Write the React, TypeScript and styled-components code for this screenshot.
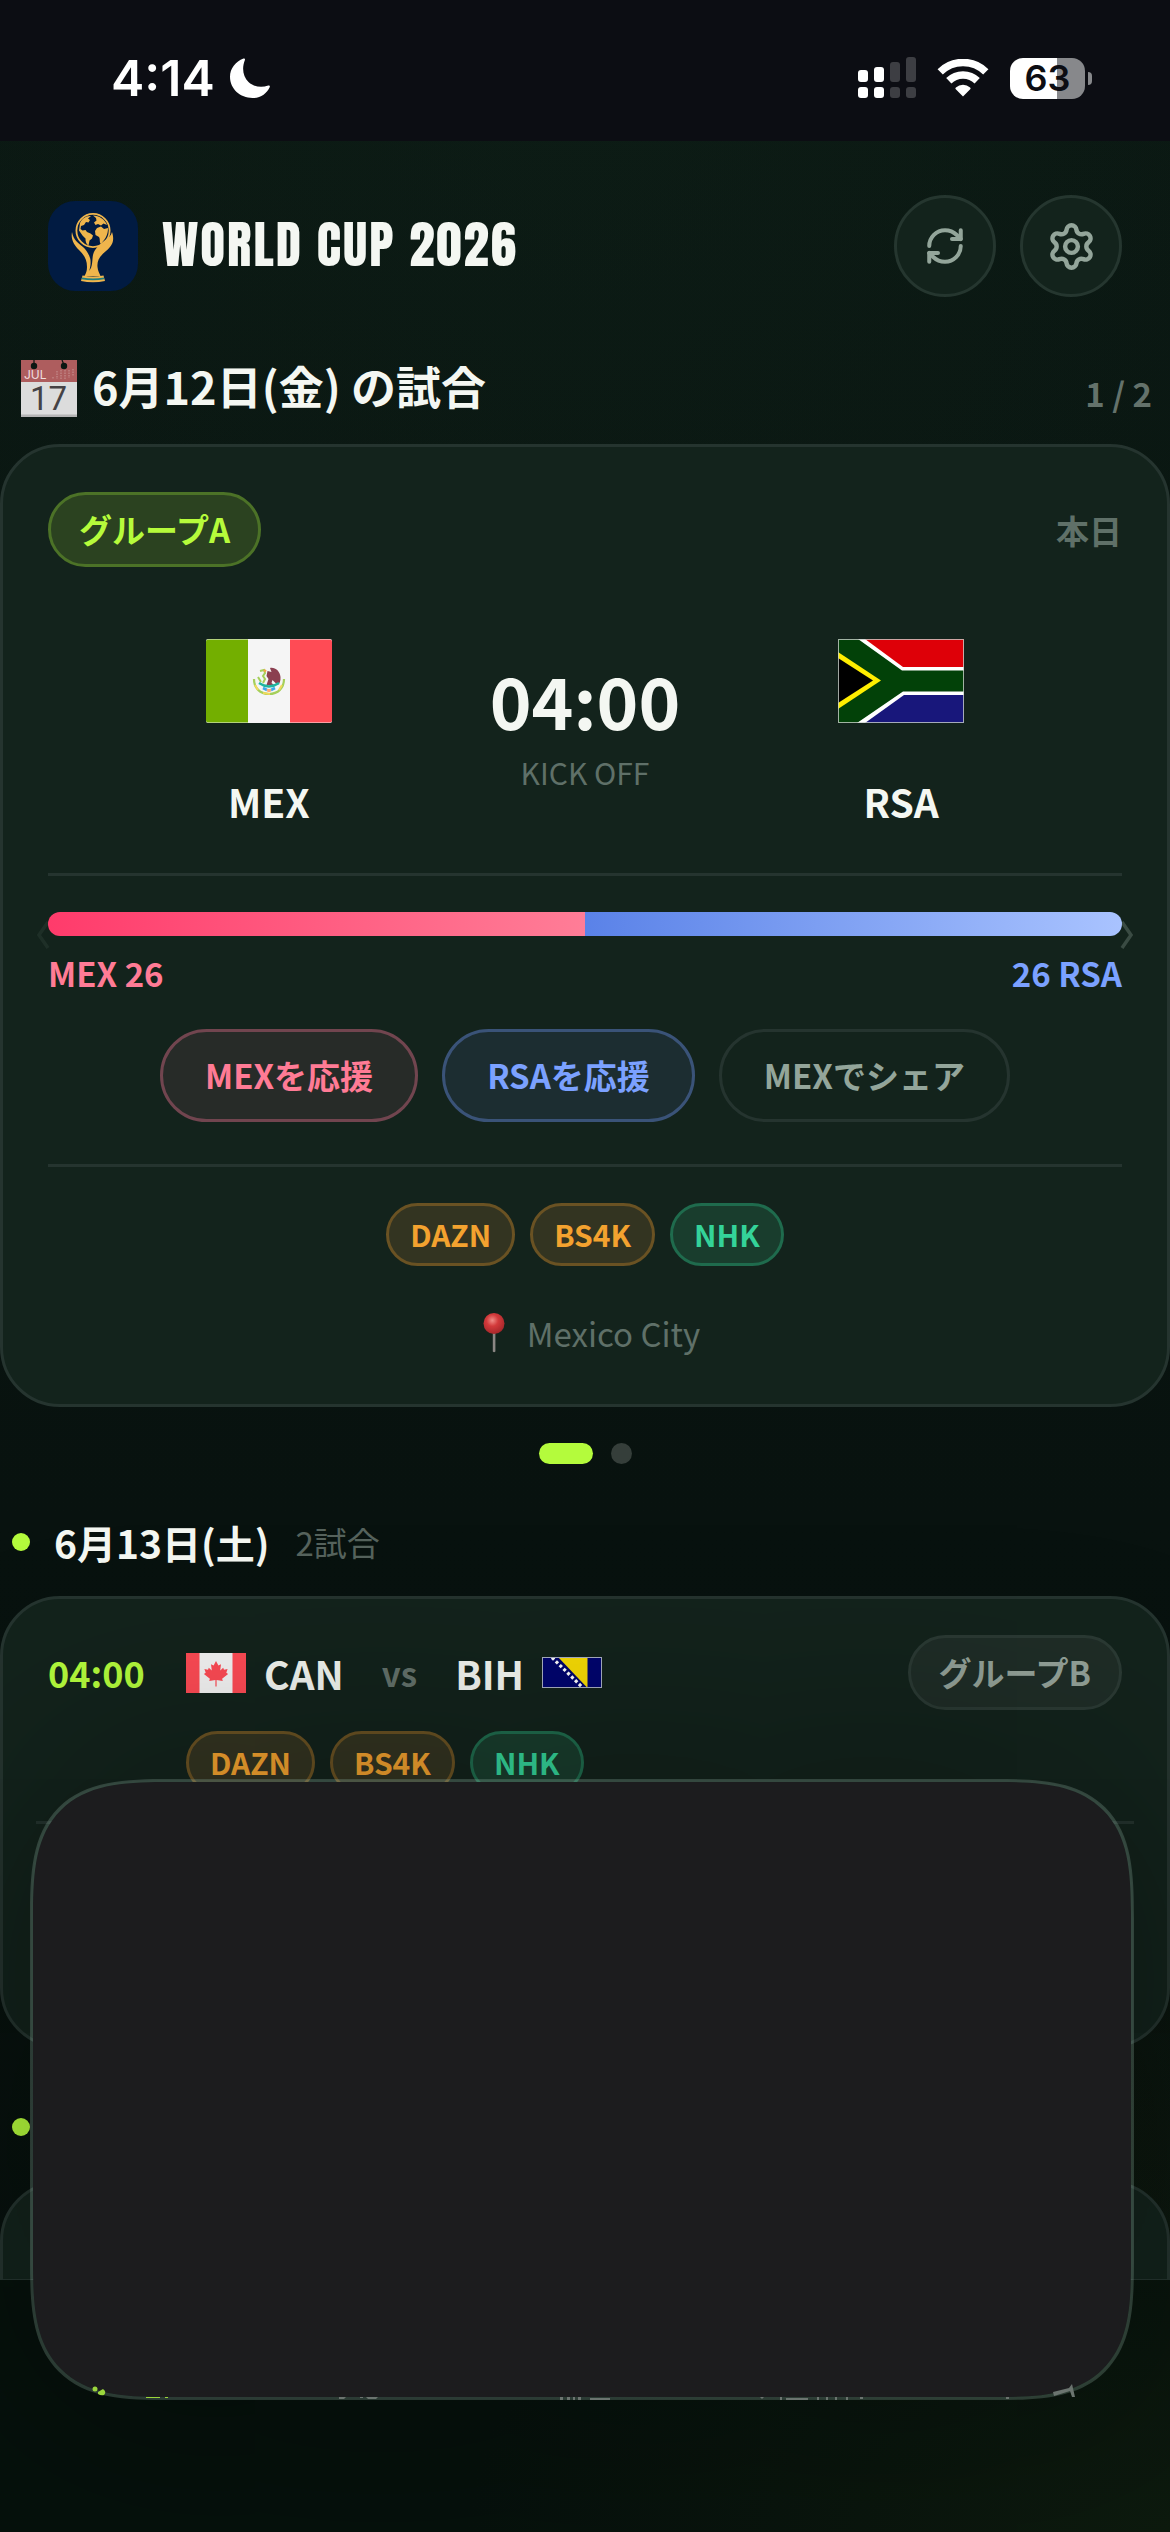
import React, { useState } from "react";
import styled, { createGlobalStyle, css } from "styled-components";
import { RefreshCw, Settings } from "lucide-react";

type Tone = "amber" | "green";

interface Channel {
  name: string;
  tone: Tone;
}

const channels: Channel[] = [
  { name: "DAZN", tone: "amber" },
  { name: "BS4K", tone: "amber" },
  { name: "NHK", tone: "green" },
];

const votes = { home: 26, away: 26 };

export default function App() {
  const [slide, setSlide] = useState(0);
  const homeShare = (votes.home / (votes.home + votes.away)) * 100;

  return (
    <Page>
      <GlobalStyle />
      <StatusBar>
        <Clock>
          4:14
          <MoonIcon />
        </Clock>
        <StatusIcons>
          <SignalIcon />
          <WifiIcon />
          <Battery>
            <BatteryBody>63</BatteryBody>
            <BatteryNub />
          </Battery>
        </StatusIcons>
      </StatusBar>

      <Header>
        <TrophyLogo />
        <AppTitle>WORLD CUP 2026</AppTitle>
        <RoundButton type="button" aria-label="更新">
          <RefreshCw size={42} strokeWidth={2.3} />
        </RoundButton>
        <RoundButton type="button" aria-label="設定">
          <Settings size={51} strokeWidth={2.1} />
        </RoundButton>
      </Header>

      <main>
        <SectionRow>
          <CalendarIcon />
          <SectionTitle>6月12日(金) の試合</SectionTitle>
          <Counter>1 / 2</Counter>
        </SectionRow>

        <HeroCard>
          <SlideButton type="button" $side="left" aria-label="前の試合">
            <Chevron />
          </SlideButton>
          <SlideButton type="button" $side="right" aria-label="次の試合">
            <Chevron />
          </SlideButton>

          <HeroTop>
            <GroupBadge $active>グループA</GroupBadge>
            <Today>本日</Today>
          </HeroTop>

          <Matchup>
            <Team>
              <MexicoFlag />
              <TeamName>MEX</TeamName>
            </Team>
            <Kickoff>
              <KickoffTime>04:00</KickoffTime>
              <KickoffLabel>KICK OFF</KickoffLabel>
            </Kickoff>
            <Team>
              <SouthAfricaFlag />
              <TeamName>RSA</TeamName>
            </Team>
          </Matchup>

          <CheerSection>
            <CheerBar>
              <HomeBar style={{ width: `${homeShare}%` }} />
              <AwayBar />
            </CheerBar>
            <CheerCounts>
              <HomeCount>MEX {votes.home}</HomeCount>
              <AwayCount>{votes.away} RSA</AwayCount>
            </CheerCounts>
            <CheerButtons>
              <CheerButton type="button" $kind="home">
                MEXを応援
              </CheerButton>
              <CheerButton type="button" $kind="away">
                RSAを応援
              </CheerButton>
              <CheerButton type="button" $kind="share">
                MEXでシェア
              </CheerButton>
            </CheerButtons>
          </CheerSection>

          <ChannelSection>
            <ChannelRow>
              {channels.map((channel) => (
                <ChannelBadge key={channel.name} $tone={channel.tone}>
                  {channel.name}
                </ChannelBadge>
              ))}
            </ChannelRow>
            <Venue>
              <PinIcon />
              Mexico City
            </Venue>
          </ChannelSection>
        </HeroCard>

        <Pager>
          {[0, 1].map((index) => (
            <PagerDot
              key={index}
              type="button"
              $active={slide === index}
              aria-label={`${index + 1}枚目`}
              onClick={() => setSlide(index)}
            />
          ))}
        </Pager>

        <DateRow>
          <Bullet />
          <DateTitle>6月13日(土)</DateTitle>
          <MatchCount>2試合</MatchCount>
        </DateRow>

        <ListCard>
          <MatchItem>
            <MatchTime>04:00</MatchTime>
            <MatchBody>
              <MatchTeams>
                <CanadaFlag />
                <ShortName>CAN</ShortName>
                <Versus>vs</Versus>
                <ShortName>BIH</ShortName>
                <BosniaFlag />
              </MatchTeams>
              <ListChannels>
                {channels.map((channel) => (
                  <ChannelBadge key={channel.name} $tone={channel.tone}>
                    {channel.name}
                  </ChannelBadge>
                ))}
              </ListChannels>
            </MatchBody>
            <GroupBadge>グループB</GroupBadge>
          </MatchItem>
          <NextMatch />
        </ListCard>

        <DateRow>
          <Bullet />
        </DateRow>
        <ListCard />
      </main>

      <BottomNav />
      <Sheet>
        <SheetEdge />
      </Sheet>
    </Page>
  );
}

/* ---------- icons ---------- */

const MoonIcon = () => (
  <svg width="44" height="44" viewBox="0 0 44 44" aria-hidden="true">
    <path
      d="M15.5 2.500c.9-.4 1.800.4 1.400 1.400C13.600 12 15 21 20.500 26c5.500 5 13 6 19.800 3.500 1-.4 1.900.5 1.500 1.400C38.800 37.600 32.500 42 24.500 42 12.200 42 2 33 2 20.800 2 12.500 7.500 5.500 15.500 2.500z"
      fill="#fff"
    />
  </svg>
);

const SignalIcon = () => (
  <svg width="58" height="42" viewBox="0 0 58 42" aria-hidden="true">
    <g fill="#fff">
      <rect x="0" y="13" width="10" height="12" rx="3" />
      <rect x="16" y="10" width="10" height="15" rx="3" />
      <rect x="0" y="30" width="10" height="11" rx="3" />
      <rect x="16" y="30" width="10" height="11" rx="3" />
    </g>
    <g fill="#3d3e43">
      <rect x="32" y="5" width="10" height="20" rx="3" />
      <rect x="48" y="0" width="10" height="25" rx="3" />
      <rect x="32" y="30" width="10" height="11" rx="3" />
      <rect x="48" y="30" width="10" height="11" rx="3" />
    </g>
  </svg>
);

const WifiIcon = () => (
  <svg width="52" height="38" viewBox="0 0 52 38" aria-hidden="true">
    <g fill="none" stroke="#fff" strokeWidth="7.500">
      <path d="M3.200 12.800a32.500 32.500 0 0 1 45.600 0" />
      <path d="M11.800 21.800a20.300 20.300 0 0 1 28.400 0" />
    </g>
    <path d="M26 37.500l-7.200-7.300c-.6-.6-.5-1.300.1-1.800a11 11 0 0 1 14.200 0c.6.5.7 1.200.1 1.800z" fill="#fff" />
  </svg>
);

const TrophyLogo = () => (
  <Logo viewBox="0 0 90 90" role="img" aria-label="World Cup">
    <rect width="90" height="90" rx="27" fill="#011b42" />
    <circle cx="45" cy="29.500" r="16.600" fill="#011b42" stroke="#efb54c" strokeWidth="1.800" />
    <g fill="#efb54c">
      <path d="M32 22c2-4.500 6-7.500 11-7l-3 2.500 2 1.500-1.500 2.500-2.500-.5-2 3-3 1-.5 3 2 1.500 3-.5 1.500 2 3.500 1.500 2.500 2-1 3-2.500 2-1 5c-2.500-1.500-3-4-3-7l-3-3-3.500-5z" />
      <path d="M45 14.500c6 0 12 4 14 9.500l-3.500-1.500-2.500 2-3-1.500-2.500 1-1.500-2.500 2.500-2-.5-2.500z" />
      <path d="M49 27l4-1.500 3 2.500 4-1c0 6-2 10-5.500 14l-1.500 2c-2-2-.5-4.500-2-7l-3.500-2-.5-4z" />
      <path d="M24 31c1.500 8 6 11 11 15 3.500 3 7 9 7.500 13 .4 4-.2 8-1.500 11 4-4 3-12 4-16 1.500-6 6-10 11-14 4-3 7-5 8-9 3 9 0 14-6 19-7 6-9 10-8.500 16 .3 4 2 6 3 9H36.500c1.500-3 2.500-5 2.500-9 0-8-3-12-8-17-5-5-8.500-11-7-18z" />
      <path d="M34.500 74.500q10.500 2 21 0l1.500 5.500q-12 2.500-24 0z" />
    </g>
    <path d="M34 76.500q11 2 22 0v1.800q-11 2-22.500 0z" fill="#1f7f80" />
  </Logo>
);

const CalendarIcon = () => (
  <svg width="56" height="57" viewBox="0 0 56 57" aria-hidden="true">
    <rect width="56" height="57" fill="#dcdcdc" />
    <rect width="56" height="22" fill="#ae5d5e" />
    <rect y="54.500" width="56" height="2.500" fill="#b4b4b4" />
    <circle cx="13" cy="6" r="3.200" fill="#0b1712" />
    <circle cx="43" cy="6" r="3.200" fill="#0b1712" />
    <path d="M13 0v5M41 0l2 5" stroke="#0b1712" strokeWidth="1.200" />
    <path d="M32 17v2M36 11v8M40 10v9M44 10v9M48 10v8M52 9v7" stroke="#bf8180" strokeWidth="1.600" strokeDasharray="1.500 1" />
    <text x="3" y="19" fontFamily="Inter, sans-serif" fontSize="12" fill="#f0dede">
      JUL
    </text>
    <text x="27.500" y="50" textAnchor="middle" fontFamily="Roboto, sans-serif" fontSize="33" fill="#454245">
      17
    </text>
  </svg>
);

const Chevron = () => (
  <svg width="14" height="30" viewBox="0 0 14 30" aria-hidden="true">
    <path d="M2 2l9 13-9 13" fill="none" stroke="currentColor" strokeWidth="3.500" />
  </svg>
);

const PinIcon = () => (
  <svg width="24" height="42" viewBox="0 0 24 42" aria-hidden="true">
    <defs>
      <radialGradient id="pinHead" cx="0.420" cy="0.350" r="0.700">
        <stop offset="0" stopColor="#f08c86" />
        <stop offset="0.400" stopColor="#d33a3b" />
        <stop offset="1" stopColor="#a02428" />
      </radialGradient>
    </defs>
    <path d="M10.800 20h2.600v19.500q-1.300 1.500-2.600 0z" fill="#8b8784" />
    <circle cx="12" cy="11.500" r="10.500" fill="url(#pinHead)" />
  </svg>
);

const MexicoFlag = () => (
  <HeroFlag viewBox="0 0 126 84" role="img" aria-label="Mexico">
    <rect width="126" height="84" rx="2" fill="#f5f5f5" />
    <path d="M2 .5h40v83H2a2 2 0 0 1-2-2v-79a2 2 0 0 1 2-2z" fill="#73af00" />
    <path d="M84 .5h40a2 2 0 0 1 2 2v79a2 2 0 0 1-2 2H84z" fill="#ff4b55" />
    <path d="M48 40c0 9 6 15 15 15s15-6 15-15" fill="none" stroke="#a5cf5a" strokeWidth="2.200" />
    <path d="M49 46l3 5M57 54l7 1M73 51l3-5" stroke="#f2d95c" strokeWidth="2" />
    <path d="M64 29c5-1 10 3 10.500 9 .3 4-1 7-3 8l-5-5-1 3 4 3-9-1 2-6-2-3 1-5 4 1z" fill="#8b3f50" />
    <path d="M54 32l4-1 1 3-2 3 2 3-2 4M52 38l3 5" fill="none" stroke="#a5cf5a" strokeWidth="2" />
    <path d="M58 31l2 1.500" stroke="#f5a54a" strokeWidth="2.200" />
    <path d="M53 44q10 7 20 0" fill="none" stroke="#1fb5a0" strokeWidth="2.400" />
    <path d="M57 49l4 2M69 49l-4 2" stroke="#3ca8e8" strokeWidth="2.600" />
    <path d="M60.500 50h5l-1 3h-3z" fill="#ffa876" />
  </HeroFlag>
);

const SouthAfricaFlag = () => (
  <HeroFlag viewBox="0 0 126 84" role="img" aria-label="South Africa">
    <rect width="126" height="84" fill="#fff" />
    <path d="M27 0h99v28H65z" fill="#de0008" />
    <path d="M27 84h99V56H66z" fill="#18177b" />
    <path d="M0 0h20l44 31.500h62v21H65L19 84H0z" fill="#024108" />
    <path d="M0 13l43 28.500L0 70z" fill="#ffee00" />
    <path d="M0 19l35 22.500L0 64z" fill="#000" />
    <rect x=".5" y=".5" width="125" height="83" fill="none" stroke="#c9cfcb" strokeOpacity="0.800" />
  </HeroFlag>
);

const CanadaFlag = () => (
  <SmallFlag $height={40} viewBox="0 0 60 40" role="img" aria-label="Canada">
    <rect width="60" height="40" fill="#f5f5f5" />
    <path d="M0 0h13.500v40H0zM46.500 0H60v40H46.500z" fill="#ff4b55" />
    <path
      d="M30 8l2.400 4.500 2.600-1.300-.8 6.300 3-2.800.8 2 3.600-.6-1.300 3.600 1.800 1.200-6 4.800.7 2.300-6.200-1v6.500h-1.200V27l-6.200 1 .7-2.300-6-4.800 1.800-1.200-1.300-3.600 3.600.6.8-2 3 2.800-.8-6.300 2.600 1.300z"
      fill="#ff4b55"
    />
  </SmallFlag>
);

const BosniaFlag = () => (
  <SmallFlag $height={31} viewBox="0 0 60 31" role="img" aria-label="Bosnia and Herzegovina">
    <rect width="60" height="31" fill="#00056f" />
    <path d="M16 0h29.500v31z" fill="#f9dd05" />
    <path d="M10 .5L41 31" stroke="#fff" strokeWidth="3.200" strokeDasharray="3 2.400" />
    <rect x=".5" y=".5" width="59" height="30" fill="none" stroke="#a9b0c4" />
  </SmallFlag>
);

// Bits of the tab bar that show through the translucent rim of the sheet
const SheetEdge = () => (
  <EdgeMarks viewBox="0 0 1104 24" aria-hidden="true">
    <g fill="#9bd63c">
      <circle cx="65" cy="13" r="2.500" />
      <path d="M68 16l5-3q4 3 1 6-3 1-6-1z" />
      <path d="M116 21h14v1h-14zM135 21h3v1h-3z" />
    </g>
    <g fill="#6b746f">
      <path d="M309 21h7l-2 2h-5zM336 21h12l-2 2h-8zM330 21h3v1h-3z" />
      <path d="M530 21h3v3h-3zM537 21h3v3h-3zM543 21h2v3h-2zM548 21h3v3h-3zM560 22h20v2h-20z" />
      <path d="M730 21h4l-2 2zM750 21h2v3h-2zM756 22h22v2h-22zM787 21h2v3h-2zM796 21h2v3h-2zM805 21h2v3h-2zM816 21h2v3h-2zM830 21h3v2h-3zM976 21h3v2h-3z" />
      <path d="M1023 16l16-4 3-4 3 13h-3l-2-6-16 5z" />
    </g>
  </EdgeMarks>
);

/* ---------- styles ---------- */

const GlobalStyle = createGlobalStyle`
  * {
    box-sizing: border-box;
  }
  body {
    margin: 0;
    background: #050d0a;
    color: #f4f7f2;
    font-family: "Noto Sans CJK JP", "Noto Sans", sans-serif;
    font-size: 33px;
    line-height: 48px;
  }
  button {
    font: inherit;
    color: inherit;
    padding: 0;
    margin: 0;
    border: 0;
    background: none;
    cursor: pointer;
  }
  svg {
    display: block;
    flex: none;
  }
`;

const Page = styled.div`
  position: relative;
  height: 100vh;
  overflow: hidden;
  background:
    radial-gradient(ellipse 90% 50% at 50% 0, rgba(30, 60, 42, 0.14), transparent),
    radial-gradient(ellipse 60% 30% at 100% 100%, rgba(60, 80, 20, 0.16), transparent),
    linear-gradient(#0a1712, #08120f 60%, #07110d);
`;

const StatusBar = styled.div`
  display: flex;
  align-items: center;
  justify-content: space-between;
  height: 141px;
  padding: 15px 78px 0 111px;
  background: #0c0d13;
  color: #fff;
  font-family: Inter, sans-serif;
`;

const Clock = styled.div`
  display: flex;
  align-items: center;
  gap: 13px;
  font-size: 50px;
  font-weight: 600;
`;

const StatusIcons = styled.div`
  display: flex;
  align-items: center;
  gap: 21px;
`;

const Battery = styled.div`
  display: flex;
  align-items: center;
  gap: 3px;
`;

const BatteryBody = styled.div`
  width: 75px;
  height: 41px;
  border-radius: 13px;
  background: linear-gradient(90deg, #fff 63%, #87888b 63%);
  color: #0c0d13;
  font-size: 36px;
  font-weight: 600;
  line-height: 41px;
  text-align: center;
`;

const BatteryNub = styled.div`
  width: 4px;
  height: 13px;
  border-radius: 0 4px 4px 0;
  background: #87888b;
`;

const Header = styled.header`
  display: flex;
  align-items: center;
  gap: 24px;
  padding: 54px 48px 30px;
`;

const Logo = styled.svg`
  width: 90px;
  height: 90px;
`;

const AppTitle = styled.h1`
  flex: 1;
  margin: 0;
  padding-bottom: 3px;
  font-family: Anton, "Roboto Condensed", sans-serif;
  font-size: 51px;
  font-weight: 400;
  letter-spacing: 2px;
  line-height: 72px;
`;

const RoundButton = styled.button`
  display: flex;
  align-items: center;
  justify-content: center;
  width: 102px;
  height: 102px;
  border: 3px solid #25362f;
  border-radius: 50%;
  background: #13231c;
  color: #93a59a;
`;

const SectionRow = styled.div`
  display: flex;
  align-items: flex-end;
  gap: 15px;
  height: 117px;
  padding: 0 18px 27px 21px;
`;

const SectionTitle = styled.h2`
  flex: 1;
  margin: 0;
  font-size: 45px;
  font-weight: 700;
  line-height: 63px;
`;

const Counter = styled.span`
  color: #64726b;
  font-weight: 700;
`;

const Card = styled.section`
  position: relative;
  border: 3px solid #25342f;
  border-radius: 60px;
  background: #13231c;
`;

const HeroCard = styled(Card)`
  padding: 45px;
`;

const SlideButton = styled.button<{ $side: "left" | "right" }>`
  position: absolute;
  top: 50%;
  margin-top: -6px;
  ${({ $side }) => $side}: 33px;
  color: #3a4b43;

  ${({ $side }) =>
    $side === "left" &&
    css`
      opacity: 0.3;
      transform: rotate(180deg);
    `}
`;

const HeroTop = styled.div`
  display: flex;
  align-items: center;
  justify-content: space-between;
`;

const GroupBadge = styled.span<{ $active?: boolean }>`
  padding: 9px 28px;
  border: 3px solid ${({ $active }) => ($active ? "#4c7227" : "#2b3a34")};
  border-radius: 38px;
  background: ${({ $active }) => ($active ? "#2b4220" : "#1f2d27")};
  color: ${({ $active }) => ($active ? "#b6fb3b" : "#93a198")};
  font-weight: 700;
  line-height: 51px;
`;

const Today = styled.span`
  color: #5f7068;
  font-weight: 700;
`;

const Matchup = styled.div`
  display: grid;
  grid-template-columns: 1fr auto 1fr;
  align-items: start;
  padding: 72px 0 48px;
`;

const Team = styled.div`
  display: flex;
  flex-direction: column;
  align-items: center;
  gap: 54px;
`;

const HeroFlag = styled.svg`
  width: 126px;
  height: 84px;
`;

const TeamName = styled.span`
  font-size: 39px;
  font-weight: 700;
`;

const Kickoff = styled.div`
  display: flex;
  flex-direction: column;
  align-items: center;
  gap: 9px;
  padding-top: 18px;
`;

const KickoffTime = styled.strong`
  font-size: 71px;
  font-weight: 700;
  line-height: 84px;
`;

const KickoffLabel = styled.span`
  color: #5f7068;
  font-size: 30px;
  line-height: 45px;
`;

const CheerSection = styled.div`
  padding: 36px 0 42px;
  border-top: 3px solid #25342f;
`;

const CheerBar = styled.div`
  position: relative;
  display: flex;
  height: 24px;
  border-radius: 12px;
  overflow: hidden;
`;

const HomeBar = styled.div`
  background: linear-gradient(90deg, #ff3b6b, #ff7d97);
`;

const AwayBar = styled.div`
  flex: 1;
  background: linear-gradient(90deg, #5a82e8, #a9c3ff);
`;

const CheerCounts = styled.div`
  display: flex;
  justify-content: space-between;
  padding: 13px 0 32px;
  font-weight: 700;
`;

const HomeCount = styled.span`
  color: #ff7b95;
`;

const AwayCount = styled.span`
  color: #7ba1ff;
`;

const CheerButtons = styled.div`
  display: flex;
  justify-content: center;
  gap: 24px;
`;

const cheerColors = {
  home: css`
    border-color: #71454f;
    background: #272b28;
    color: #ff7b95;
  `,
  away: css`
    border-color: #3a5378;
    background: #1c2d31;
    color: #7ba1ff;
  `,
  share: css`
    border-color: #25342f;
    color: #93a59a;
  `,
};

const CheerButton = styled.button<{ $kind: "home" | "away" | "share" }>`
  height: 93px;
  padding: 0 42px 2px;
  border: 3px solid;
  border-radius: 47px;
  font-weight: 700;
  ${({ $kind }) => cheerColors[$kind]}
`;

const ChannelSection = styled.div`
  padding-top: 36px;
  border-top: 3px solid #25342f;
`;

const ChannelRow = styled.div`
  display: flex;
  justify-content: center;
  gap: 15px;
`;

const ChannelBadge = styled.span<{ $tone: Tone }>`
  padding: 6px 21px;
  border: 3px solid ${({ $tone }) => ($tone === "amber" ? "#6a5223" : "#1f6b4d")};
  border-radius: 32px;
  background: ${({ $tone }) => ($tone === "amber" ? "#333421" : "#193d2d")};
  color: ${({ $tone }) => ($tone === "amber" ? "#f3a22f" : "#34d399")};
  font-size: 30px;
  font-weight: 700;
  line-height: 45px;
`;

const Venue = styled.div`
  display: flex;
  align-items: center;
  justify-content: center;
  gap: 21px;
  padding: 43px 0 2px 12px;
  color: #5f7068;
`;

const Pager = styled.div`
  display: flex;
  justify-content: center;
  gap: 18px;
  padding: 36px 0 42px;
`;

const PagerDot = styled.button<{ $active: boolean }>`
  width: ${({ $active }) => ($active ? 54 : 21)}px;
  height: 21px;
  border-radius: 11px;
  background: ${({ $active }) => ($active ? "#b4fb3c" : "#353e3a")};
`;

const DateRow = styled.div`
  display: flex;
  align-items: center;
  height: 72px;
  margin-bottom: 18px;
  padding: 0 12px;
`;

const Bullet = styled.span`
  width: 18px;
  height: 18px;
  margin-right: 24px;
  border-radius: 50%;
  background: #b4fb3c;
`;

const DateTitle = styled.h3`
  margin: 0 26px 0 0;
  font-size: 39px;
  font-weight: 700;
`;

const MatchCount = styled.span`
  color: #56635d;
`;

const ListCard = styled(Card)`
  min-height: 452px;
  margin-bottom: 43px;
`;

const MatchItem = styled.article`
  display: flex;
  align-items: flex-start;
  padding: 36px 45px 27px;
`;

const MatchTime = styled.time`
  width: 138px;
  color: #b4fb3c;
  font-size: 36px;
  font-weight: 700;
  line-height: 75px;
`;

const MatchBody = styled.div`
  flex: 1;
`;

const MatchTeams = styled.div`
  display: flex;
  align-items: center;
  height: 75px;
`;

const SmallFlag = styled.svg<{ $height: number }>`
  width: 60px;
  height: ${({ $height }) => $height}px;
`;

const ShortName = styled.span`
  margin: 0 18px;
  font-size: 39px;
  font-weight: 700;
`;

const Versus = styled.span`
  margin: 0 20px;
  color: #64726b;
  font-weight: 700;
`;

const ListChannels = styled.div`
  display: flex;
  gap: 15px;
  padding-top: 21px;
`;

const NextMatch = styled.div`
  height: 200px;
  margin: 0 33px;
  border-top: 3px solid #25342f;
`;

const BottomNav = styled.nav`
  position: absolute;
  right: 0;
  bottom: 0;
  left: 0;
  height: 253px;
  border-top: 1px solid #25342f;
  background: radial-gradient(ellipse 60% 160% at 100% 100%, #0d1a0e, #06110c);
`;

// A blank sheet floating over the lower half of the screen
const Sheet = styled.div`
  position: absolute;
  right: 36px;
  bottom: 132px;
  left: 30px;
  height: 621px;
  border: 3px solid rgba(130, 160, 145, 0.3);
  border-radius: 98px;
  background: #1c1c1e;
  background-clip: padding-box;
  box-shadow: 0 0 240px rgba(0, 0, 0, 0.45);

  @supports (corner-shape: superellipse(1.6)) {
    border-radius: 140px;
    corner-shape: superellipse(1.6);
  }
`;

const EdgeMarks = styled.svg`
  position: absolute;
  bottom: -3px;
  left: -3px;
  width: calc(100% + 6px);
`;
